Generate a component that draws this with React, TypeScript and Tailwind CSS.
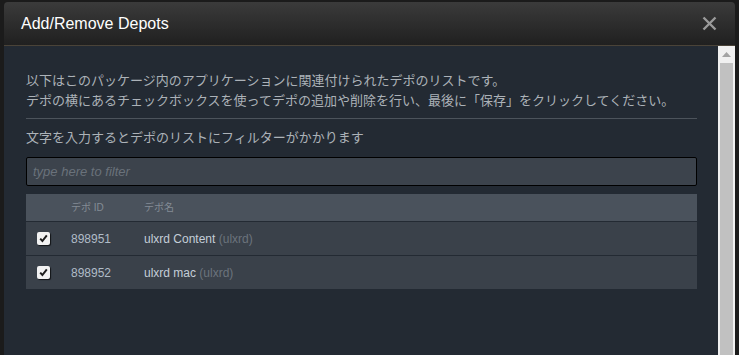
import React from "react";

const font = { fontFamily: '"Liberation Sans", Arial, "Noto Sans CJK JP", sans-serif' };

function Check() {
  return (
    <div className="w-[13px] h-[13px] bg-[#f2f2f2] rounded-[2px] flex items-center justify-center shadow-[1px_1px_1px_rgba(0,0,0,0.7)]">
      <svg width="9" height="9" viewBox="0 0 9 9">
        <path d="M1.2 4.6 L3.4 7 L7.8 1.4" stroke="#1e1e1e" strokeWidth="2" fill="none" />
      </svg>
    </div>
  );
}

const rows = [
  { id: "898951", name: "ulxrd Content", tag: "(ulxrd)" },
  { id: "898952", name: "ulxrd mac", tag: "(ulxrd)" },
];

export default function App() {
  return (
    <div className="w-[739px] h-[355px] bg-[#1b1b1b] pt-[2px] pl-[4px] overflow-hidden" style={font}>
      <div className="w-[731px] h-[353px] flex flex-col rounded-t-[4px] overflow-hidden">
        <div className="h-[44px] shrink-0 flex items-center justify-between pl-[17px] pr-[18px] bg-gradient-to-b from-[#3b3b3b] to-[#202020] border-b border-[#4a4338]">
          <span className="text-[16px] text-white">Add/Remove Depots</span>
          <svg width="15" height="15" viewBox="0 0 15 15">
            <path d="M1.5 1.5 L13.5 13.5 M13.5 1.5 L1.5 13.5" stroke="#9a9a9a" strokeWidth="2.4" />
          </svg>
        </div>
        <div className="flex-1 flex bg-[#232a33]">
          <div className="flex-1 pl-[22px] pr-[21px] pt-[25px]">
            <p className="text-[13px] leading-[20px] text-[#acb2b8]">
              以下はこのパッケージ内のアプリケーションに関連付けられたデポのリストです。
              <br />
              デポの横にあるチェックボックスを使ってデポの追加や削除を行い、最後に「保存」をクリックしてください。
            </p>
            <div className="mt-[7px] h-px bg-[#4c535b]" />
            <p className="mt-[9px] text-[13px] leading-[20px] text-[#acb2b8]">
              文字を入力するとデポのリストにフィルターがかかります
            </p>
            <div className="mt-[9px] h-[29px] border border-black bg-[#3c434c] flex items-center pl-[6px] rounded-[2px]">
              <span className="text-[13px] italic text-[#6a727b]">type here to filter</span>
            </div>
            <div className="mt-[8px] flex flex-col gap-px">
              <div className="h-[27px] bg-[#4a525c] flex items-center text-[10px] text-[#848c95]">
                <span className="w-[45px]" />
                <span className="w-[73px]">デポ ID</span>
                <span>デポ名</span>
              </div>
              {rows.map((r) => (
                <div key={r.id} className="h-[33px] bg-[#3a414a] flex items-center text-[12px]">
                  <span className="w-[45px] pl-[11px]">
                    <Check />
                  </span>
                  <span className="w-[73px] text-[#b0bcc7]">{r.id}</span>
                  <span className="text-[#c4ced8]">
                    {r.name} <span className="text-[#6b737c]">{r.tag}</span>
                  </span>
                </div>
              ))}
            </div>
          </div>
          <div className="w-[17px] bg-[#f0f0f0] flex flex-col items-center">
            <div className="h-[17px] flex items-center justify-center">
              <svg width="9" height="5" viewBox="0 0 9 5">
                <path d="M0 5 L4.5 0 L9 5 Z" fill="#a3a3a3" />
              </svg>
            </div>
            <div className="w-[13px] flex-1 bg-[#c1c1c1]" />
          </div>
        </div>
      </div>
    </div>
  );
}
